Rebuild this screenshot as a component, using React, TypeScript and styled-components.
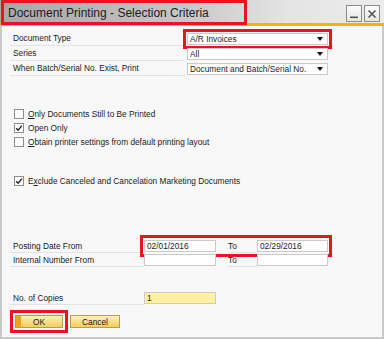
import React from 'react';
import styled, { createGlobalStyle } from 'styled-components';

const GlobalStyle = createGlobalStyle`
  body {
    margin: 0;
    background: #ffffff;
  }
`;

const Window = styled.div`
  width: 384px;
  height: 339px;
  box-sizing: border-box;
  border: 2px solid #c9c9c9;
  border-top: none;
  background: #f8f8f8;
  font-family: 'Liberation Sans', Arial, sans-serif;
  font-size: 8.3px;
  color: #1a1a1a;
  display: flex;
  flex-direction: column;
`;

const TitleBar = styled.div`
  height: 23px;
  display: flex;
  align-items: center;
  justify-content: space-between;
  background: linear-gradient(to right, #a7a7a7 0%, #c4c4c4 45%, #e4e4e4 75%, #ececec 100%);
  border-bottom: 3px solid #f5b400;
  margin: 0 -2px;
  padding: 0 4px 0 1px;
`;

const Title = styled.div`
  height: 19px;
  width: 236px;
  border: 3px solid #e8141e;
  display: flex;
  align-items: center;
  padding-left: 4px;
  font-size: 12px;
  color: #202020;
  margin-top: 2px;
`;

const Controls = styled.div`
  display: flex;
  gap: 2px;
  margin-top: 4px;
`;

const ControlButton = styled.div`
  width: 14px;
  height: 15px;
  border: 1px solid #8c8c8c;
  background: linear-gradient(#fbfbfb, #e6e6e6);
  display: flex;
  align-items: center;
  justify-content: center;
`;

const Body = styled.div`
  flex: 1;
  display: flex;
  flex-direction: column;
  padding: 5px 0 0 8px;
`;

const Row = styled.div`
  height: 15px;
  display: flex;
  align-items: center;
`;

const Label = styled.div<{ $w: number }>`
  width: ${(p) => p.$w}px;
  height: 100%;
  box-sizing: border-box;
  display: flex;
  align-items: center;
  padding-left: 3px;
  border-bottom: 1px solid #e3e3e3;
`;

const Select = styled.div<{ $focus?: boolean }>`
  width: 141px;
  height: 12px;
  margin-left: 2px;
  box-sizing: border-box;
  background: #ffffff;
  border: 1px solid #c9c9c9;
  display: flex;
  align-items: center;
  justify-content: space-between;
  padding: 0 4px 0 2px;
  outline: ${(p) => (p.$focus ? '3px solid #e8141e' : 'none')};
  outline-offset: 1px;
`;

const Arrow = styled.span`
  width: 0;
  height: 0;
  border-left: 3.5px solid transparent;
  border-right: 3.5px solid transparent;
  border-top: 4px solid #111;
`;

const CheckList = styled.div<{ $top: number }>`
  display: flex;
  flex-direction: column;
  margin-top: ${(p) => p.$top}px;
  padding-left: 4px;
`;

const CheckRow = styled.div`
  height: 14px;
  display: flex;
  align-items: center;
  gap: 4px;
`;

const Box = styled.span`
  width: 10px;
  height: 10px;
  box-sizing: border-box;
  border: 1px solid #8e8e8e;
  background: #ffffff;
  display: flex;
  align-items: center;
  justify-content: center;
`;

const Mnemonic = styled.span`
  text-decoration: underline;
`;

const RangeBlock = styled.div<{ $top: number }>`
  display: flex;
  flex-direction: column;
  margin-top: ${(p) => p.$top}px;
`;

const RangeRow = styled.div`
  height: 14px;
  display: flex;
  align-items: center;
`;

const Group = styled.div<{ $focus?: boolean }>`
  display: flex;
  align-items: center;
  height: 100%;
  outline: ${(p) => (p.$focus ? '3px solid #e8141e' : 'none')};
  outline-offset: 1px;
`;

const Input = styled.div<{ $w: number; $yellow?: boolean }>`
  width: ${(p) => p.$w}px;
  height: 12px;
  box-sizing: border-box;
  background: ${(p) => (p.$yellow ? '#fff0a2' : '#ffffff')};
  border: 1px solid #cacaca;
  display: flex;
  align-items: center;
  padding-left: 2px;
`;

const ToLabel = styled.div`
  width: 29px;
  height: 100%;
  box-sizing: border-box;
  margin-left: 12px;
  display: flex;
  align-items: center;
  border-bottom: 1px solid #e3e3e3;
`;

const ButtonBar = styled.div`
  display: flex;
  gap: 7px;
  margin-top: 10px;
  padding-left: 5px;
`;

const Button = styled.div<{ $w: number; $focus?: boolean }>`
  width: ${(p) => p.$w}px;
  height: 13px;
  box-sizing: border-box;
  border: 1px solid #b79c52;
  background: ${(p) =>
    p.$focus
      ? 'linear-gradient(to right, #f3a310 0, #f3a310 5px, transparent 5px), linear-gradient(#fdf0b8, #f4cd5a)'
      : 'linear-gradient(#fdf0b8, #f4cd5a)'};
  display: flex;
  align-items: center;
  justify-content: center;
  outline: ${(p) => (p.$focus ? '3px solid #e8141e' : 'none')};
  outline-offset: 2px;
`;

const Check = () => (
  <svg width="8" height="8" viewBox="0 0 8 8">
    <path d="M1.2 4.2 L3.1 6.2 L6.9 1.6" fill="none" stroke="#222" strokeWidth="1.4" />
  </svg>
);

export default function App() {
  return (
    <>
      <GlobalStyle />
      <Window>
        <TitleBar>
          <Title>Document Printing - Selection Criteria</Title>
          <Controls>
            <ControlButton>
              <svg width="10" height="10" viewBox="0 0 10 10">
                <rect x="1" y="7.5" width="8" height="1.6" fill="#555" />
              </svg>
            </ControlButton>
            <ControlButton>
              <svg width="10" height="10" viewBox="0 0 10 10">
                <path d="M1.5 1.5 L8.5 8.5 M8.5 1.5 L1.5 8.5" stroke="#555" strokeWidth="1.6" />
              </svg>
            </ControlButton>
          </Controls>
        </TitleBar>
        <Body>
          <Row>
            <Label $w={175}>Document Type</Label>
            <Select $focus>
              A/R Invoices
              <Arrow />
            </Select>
          </Row>
          <Row>
            <Label $w={175}>Series</Label>
            <Select>
              All
              <Arrow />
            </Select>
          </Row>
          <Row>
            <Label $w={175}>When Batch/Serial No. Exist, Print</Label>
            <Select>
              Document and Batch/Serial No.
              <Arrow />
            </Select>
          </Row>

          <CheckList $top={31}>
            <CheckRow>
              <Box />
              <span>
                <Mnemonic>O</Mnemonic>nly Documents Still to Be Printed
              </span>
            </CheckRow>
            <CheckRow>
              <Box>
                <Check />
              </Box>
              <span>Open Only</span>
            </CheckRow>
            <CheckRow>
              <Box />
              <span>
                <Mnemonic>O</Mnemonic>btain printer settings from default printing layout
              </span>
            </CheckRow>
          </CheckList>

          <CheckList $top={25}>
            <CheckRow>
              <Box>
                <Check />
              </Box>
              <span>
                E<Mnemonic>x</Mnemonic>clude Canceled and Cancelation Marketing Documents
              </span>
            </CheckRow>
          </CheckList>

          <RangeBlock $top={51}>
            <RangeRow>
              <Label $w={134}>Posting Date From</Label>
              <Group $focus>
                <Input $w={72}>02/01/2016</Input>
                <ToLabel>To</ToLabel>
                <Input $w={71}>02/29/2016</Input>
              </Group>
            </RangeRow>
            <RangeRow>
              <Label $w={134}>Internal Number From</Label>
              <Group>
                <Input $w={72} />
                <ToLabel>To</ToLabel>
                <Input $w={71} />
              </Group>
            </RangeRow>
          </RangeBlock>

          <RangeBlock $top={24}>
            <RangeRow>
              <Label $w={134}>No. of Copies</Label>
              <Input $w={72} $yellow>
                1
              </Input>
            </RangeRow>
          </RangeBlock>

          <ButtonBar>
            <Button $w={48} $focus>
              OK
            </Button>
            <Button $w={50}>Cancel</Button>
          </ButtonBar>
        </Body>
      </Window>
    </>
  );
}
